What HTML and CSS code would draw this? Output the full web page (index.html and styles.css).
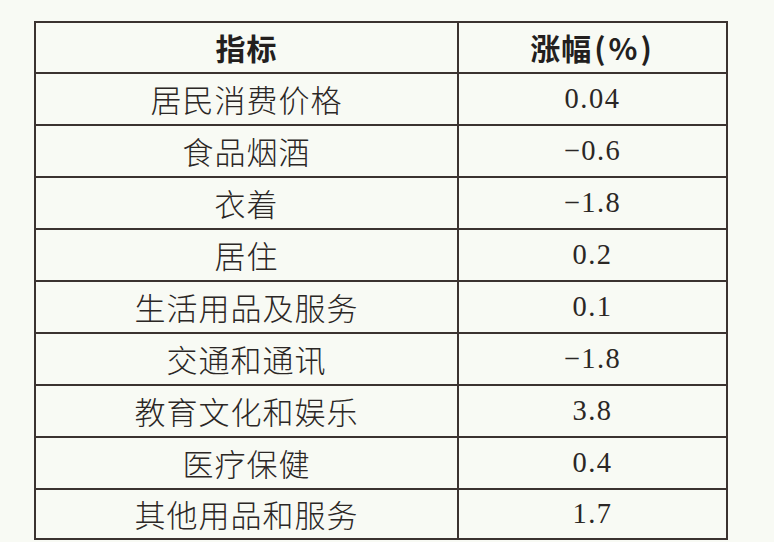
FILE: index.html
```html
<!DOCTYPE html>
<html lang="zh-CN">
<head>
<meta charset="utf-8">
<title>指标涨幅</title>
<link rel="stylesheet" href="styles.css">
</head>
<body>
<div class="page">
  <div class="table">
    <div class="cell head name">指标</div>
    <div class="cell head val">涨幅<span class="paren">(</span>%<span class="paren">)</span></div>

    <div class="cell name">居民消费价格</div>
    <div class="cell val">0.04</div>

    <div class="cell name">食品烟酒</div>
    <div class="cell val">−0.6</div>

    <div class="cell name">衣着</div>
    <div class="cell val">−1.8</div>

    <div class="cell name">居住</div>
    <div class="cell val">0.2</div>

    <div class="cell name">生活用品及服务</div>
    <div class="cell val">0.1</div>

    <div class="cell name">交通和通讯</div>
    <div class="cell val">−1.8</div>

    <div class="cell name">教育文化和娱乐</div>
    <div class="cell val">3.8</div>

    <div class="cell name">医疗保健</div>
    <div class="cell val">0.4</div>

    <div class="cell name last">其他用品和服务</div>
    <div class="cell val last">1.7</div>
  </div>
</div>
</body>
</html>
```

FILE: styles.css
```css
html, body {
  margin: 0;
  padding: 0;
  background: #f8faf4;
}

.page {
  padding: 21px 0 0 34px;
}

.table {
  width: 694px;
  box-sizing: border-box;
  border: 2px solid #3b3330;
  display: grid;
  grid-template-columns: 423px 1fr;
  grid-template-rows: 51px repeat(8, 52px) 48px;
}

.cell {
  display: flex;
  align-items: center;
  justify-content: center;
  border-bottom: 2px solid #3b3330;
  color: #2b2725;
  box-sizing: border-box;
  padding-bottom: 1px;
}

.cell.last {
  border-bottom: none;
}

.name {
  border-right: 2px solid #3b3330;
  font-family: "Noto Sans CJK SC", sans-serif;
  font-weight: 300;
  font-size: 31px;
  letter-spacing: 1px;
}

.val {
  font-family: "Liberation Serif", "Times New Roman", serif;
  font-size: 28.5px;
  letter-spacing: 1.5px;
}

.head {
  font-family: "Noto Sans CJK SC", sans-serif;
  font-weight: 700;
  font-size: 30px;
  letter-spacing: 1px;
  color: #231f1e;
}

.paren {
  margin: 0 2px;
}
```
